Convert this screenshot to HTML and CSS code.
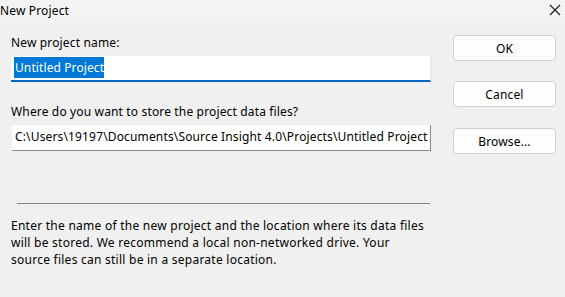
FILE: index.html
```html
<!DOCTYPE html>
<html>
<head>
<meta charset="utf-8">
<link rel="stylesheet" href="styles.css">
</head>
<body>
<div class="dialog">
  <div class="titlebar">
    <span class="title">New Project</span>
    <svg class="close" width="12" height="12" viewBox="0 0 12 12"><path d="M1 1 L11 11 M11 1 L1 11" stroke="#1a1a1a" stroke-width="1.1" fill="none"/></svg>
  </div>
  <div class="main">
    <div class="left">
      <div class="label">New project name:</div>
      <div class="input input-focus"><span class="sel">Untitled Project</span></div>
      <div class="label label2">Where do you want to store the project data files?</div>
      <div class="input input-path">C:\Users\19197\Documents\Source Insight 4.0\Projects\Untitled Project</div>
      <div class="sep"></div>
      <p class="desc">Enter the name of the new project and the location where its data files will be stored. We recommend a local non-networked drive. Your source files can still be in a separate location.</p>
    </div>
    <div class="right">
      <button class="btn">OK</button>
      <button class="btn btn-cancel">Cancel</button>
      <button class="btn btn-browse">Browse...</button>
    </div>
  </div>
</div>
</body>
</html>
```
FILE: styles.css
```css
html, body {
  margin: 0;
  padding: 0;
  background: #f0f0f0;
}
body {
  width: 565px;
  height: 297px;
  overflow: hidden;
  font-family: "Noto Sans", "Liberation Sans", sans-serif;
  font-size: 12px;
  letter-spacing: 0.15px;
  color: #000;
}
.titlebar {
  height: 23px;
  background: #f3f3f3;
  display: flex;
  align-items: center;
  justify-content: space-between;
  padding-right: 4px;
}
.title {
  line-height: 23px;
  margin-top: -2px;
}
.close {
  display: block;
  margin-top: -3px;
}
.main {
  display: flex;
  padding: 0 9px 0 11px;
}
.left {
  width: 420px;
}
.label {
  line-height: 17px;
  margin-top: 11px;
}
.label2 {
  margin-top: 21px;
}
.input {
  background: #fff;
  height: 26px;
  line-height: 24px;
  margin-top: 5px;
  box-sizing: border-box;
  white-space: nowrap;
  overflow: hidden;
}
.input-focus {
  border-bottom: 2px solid #0067c0;
  border-right: 1px solid #e3e7ec;
  padding-left: 3px;
  letter-spacing: 0.1px;
}
.sel {
  background: #0078d7;
  color: #fff;
  padding: 2px 0 2px 1px;
}
.input-path {
  margin-left: 1px;
  width: 419px;
  height: 26px;
  border-bottom: 1px solid #8a8a8a;
  border-right: 1px solid #8a8a8a;
  padding-left: 3px;
}
.sep {
  margin: 52px 0 0 6px;
  width: 413px;
  height: 1px;
  background: #808080;
}
.desc {
  margin: 13px 0 0 0;
  line-height: 17px;
  width: 420px;
  letter-spacing: 0.25px;
}
.right {
  margin-left: 22px;
  margin-top: 12px;
  display: flex;
  flex-direction: column;
}
.btn {
  width: 103px;
  height: 26px;
  box-sizing: border-box;
  background: #fdfdfd;
  border: 1px solid #d0d0d0;
  border-radius: 4px;
  font-family: inherit;
  font-size: 12px;
  letter-spacing: 0.15px;
  color: #000;
  padding: 0;
}
.btn-cancel {
  margin-top: 20px;
}
.btn-browse {
  margin-top: 21px;
}
```
